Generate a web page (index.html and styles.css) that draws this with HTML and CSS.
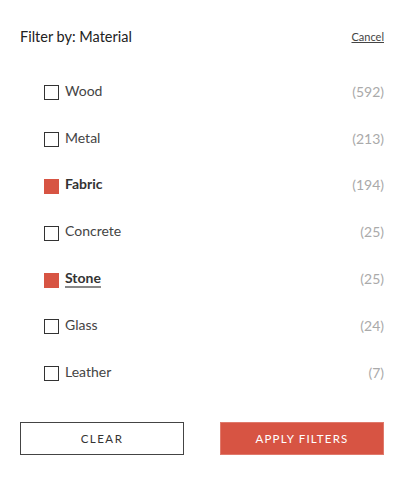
FILE: index.html
```html
<!DOCTYPE html>
<html>
<head>
<meta charset="utf-8">
<link rel="stylesheet" href="styles.css">
</head>
<body>
<div class="panel">
  <div class="header">
    <span class="title">Filter by: Material</span>
    <a class="cancel">Cancel</a>
  </div>
  <ul class="list">
    <li class="row"><span class="box"></span><span class="label">Wood</span><span class="count">(592)</span></li>
    <li class="row"><span class="box"></span><span class="label">Metal</span><span class="count">(213)</span></li>
    <li class="row checked"><span class="box"></span><span class="label">Fabric</span><span class="count">(194)</span></li>
    <li class="row"><span class="box"></span><span class="label">Concrete</span><span class="count">(25)</span></li>
    <li class="row checked focus"><span class="box"></span><span class="label">Stone</span><span class="count">(25)</span></li>
    <li class="row"><span class="box"></span><span class="label">Glass</span><span class="count">(24)</span></li>
    <li class="row"><span class="box"></span><span class="label">Leather</span><span class="count">(7)</span></li>
  </ul>
  <div class="actions">
    <button class="btn clear">CLEAR</button>
    <button class="btn apply">APPLY FILTERS</button>
  </div>
</div>
</body>
</html>
```
FILE: styles.css
```css
* { box-sizing: border-box; }
html, body { margin: 0; padding: 0; background: #fff; }
body { font-family: Lato, "Noto Sans", sans-serif; color: #333; }
.panel { width: 406px; padding: 27px 22px 0 20px; }
.header { display: flex; justify-content: space-between; align-items: center; height: 18px; }
.title { font-size: 14.5px; color: #222; }
.cancel { font-size: 11px; color: #444; text-decoration: underline; }
.list { list-style: none; margin: 23px 0 0 0; padding: 0 0 0 24px; }
.row { display: flex; align-items: center; height: 46.8px; font-size: 14px; }
.box { width: 15px; height: 15px; border: 1.5px solid #333; margin-right: 6px; margin-top: 3px; flex: none; }
.label { flex: 1; color: #444; margin-top: -2px; }
.count { color: #aaa; font-size: 14px; }
.checked .box { background: #d75443; border-color: #d75443; }
.checked .label { font-weight: 700; color: #333; }
.focus .label { text-decoration: underline; text-decoration-color: #888; text-underline-offset: 3px; text-decoration-thickness: 2px; }
.actions { display: flex; justify-content: space-between; margin-top: 26px; }
.btn { width: 164px; height: 33px; font-family: Lato, "Noto Sans", sans-serif; font-size: 11.5px; letter-spacing: 1.5px; cursor: pointer; }
.clear { background: #fff; border: 1.5px solid #444; color: #333; }
.apply { background: #d75443; border: 1px solid #e0796b; color: #fff; letter-spacing: 1.2px; }
```
